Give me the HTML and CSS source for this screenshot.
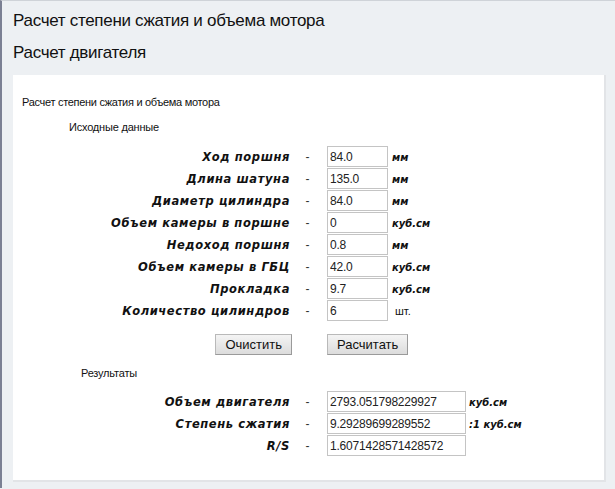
FILE: index.html
```html
<!DOCTYPE html>
<html lang="ru">
<head>
  <meta charset="UTF-8" />
  <title>Расчет двигателя</title>
  <link rel="stylesheet" href="styles.css">
</head>
<body>

  <!-- Заголовки страницы -->
  <h1 class="page-title">Расчет степени сжатия и объема мотора</h1>
  <h2 class="page-subtitle">Расчет двигателя</h2>

  <!-- Белая панель с калькулятором -->
  <div class="panel">
    <p class="panel-caption">Расчет степени сжатия и объема мотора</p>
    <p class="group-title">Исходные данные</p>

    <div class="calc-grid">
      <span class="label">Ход поршня</span><span class="dash">-</span>
      <input class="field" type="text" value="84.0"><span class="unit">мм</span>

      <span class="label">Длина шатуна</span><span class="dash">-</span>
      <input class="field" type="text" value="135.0"><span class="unit">мм</span>

      <span class="label">Диаметр цилиндра</span><span class="dash">-</span>
      <input class="field" type="text" value="84.0"><span class="unit">мм</span>

      <span class="label">Объем камеры в поршне</span><span class="dash">-</span>
      <input class="field" type="text" value="0"><span class="unit">куб.см</span>

      <span class="label">Недоход поршня</span><span class="dash">-</span>
      <input class="field" type="text" value="0.8"><span class="unit">мм</span>

      <span class="label">Объем камеры в ГБЦ</span><span class="dash">-</span>
      <input class="field" type="text" value="42.0"><span class="unit">куб.см</span>

      <span class="label">Прокладка</span><span class="dash">-</span>
      <input class="field" type="text" value="9.7"><span class="unit">куб.см</span>

      <span class="label">Количество цилиндров</span><span class="dash">-</span>
      <input class="field" type="text" value="6"><span class="unit unit-plain">шт.</span>
    </div>

    <div class="buttons">
      <div class="btn-left"><button class="btn">Очистить</button></div>
      <div class="btn-right"><button class="btn">Расчитать</button></div>
    </div>

    <p class="group-title results-title">Результаты</p>

    <div class="calc-grid results">
      <span class="label">Объем двигателя</span><span class="dash">-</span>
      <input class="field wide" type="text" value="2793.051798229927"><span class="unit">куб.см</span>

      <span class="label">Степень сжатия</span><span class="dash">-</span>
      <input class="field wide" type="text" value="9.29289699289552"><span class="unit">:1 куб.см</span>

      <span class="label">R/S</span><span class="dash">-</span>
      <input class="field wide" type="text" value="1.6071428571428572"><span class="unit"></span>
    </div>
  </div>

</body>
</html>
```

FILE: styles.css
```css
body {
  margin: 0;
  padding: 0 9px 0 13px;
  background: #edf0f3;
  border-left: 2px solid #7b8093;
  border-top: 1px solid #cfd3d8;
  font-family: 'Liberation Sans', Arial, sans-serif;
  color: #111;
  height: 488px;
  box-sizing: border-box;
}

.page-title,
.page-subtitle {
  font-weight: normal;
  font-size: 17px;
  letter-spacing: -0.3px;
  margin: 0;
  line-height: 32px;
  margin-left: -2px;
}

.page-title {
  padding-top: 4px;
}

.page-subtitle {
  margin-bottom: 6px;
}

/* Панель калькулятора */
.panel {
  background: #ffffff;
  margin-left: -2px;
  border-right: 2px solid #e2e4e7;
  border-bottom: 2px solid #e2e4e7;
  padding: 19px 0 23px 0;
}

.panel-caption {
  margin: 0 0 0 9px;
  font-size: 11px;
  letter-spacing: -0.3px;
  line-height: 16px;
}

.group-title {
  margin: 9px 0 0 56px;
  font-size: 11px;
  letter-spacing: -0.2px;
  line-height: 16px;
}

.calc-grid {
  display: grid;
  grid-template-columns: 277px 37px 64px auto;
  grid-auto-rows: 22px;
  align-items: center;
  margin-top: 11px;
}

.label {
  text-align: right;
  font-family: 'DejaVu Sans', Verdana, sans-serif;
  font-weight: bold;
  font-style: italic;
  font-size: 11.5px;
  letter-spacing: 0.6px;
}

.dash {
  text-align: center;
  font-size: 12px;
  color: #333;
  padding-right: 2px;
}

.field {
  box-sizing: border-box;
  width: 61px;
  height: 21px;
  margin: 0 0 1px 0;
  padding: 0 2px;
  border: 1px solid #c4c4c4;
  font-family: 'Liberation Sans', Arial, sans-serif;
  font-size: 12px;
  letter-spacing: -0.2px;
  color: #222;
  background: #fff;
}

.field.wide {
  width: 139px;
}

.results {
  grid-template-columns: 277px 37px 141px auto;
}

.unit {
  font-family: 'DejaVu Sans', Verdana, sans-serif;
  font-weight: bold;
  font-style: italic;
  font-size: 10px;
  padding-left: 1px;
}

.unit-plain {
  font-family: 'Liberation Sans', Arial, sans-serif;
  font-weight: normal;
  font-style: normal;
  font-size: 11px;
  padding-left: 4px;
}

/* Кнопки */
.buttons {
  display: grid;
  grid-template-columns: 279px 35px auto;
  margin-top: 12px;
}

.btn-left {
  text-align: right;
}

.btn-right {
  grid-column: 3;
}

.btn {
  height: 21px;
  padding: 0 9px;
  font-family: 'Liberation Sans', Arial, sans-serif;
  font-size: 13px;
  color: #111;
  background: linear-gradient(#f4f4f4, #dcdcdc);
  border: 1px solid #b9b9b9;
  border-right-color: #9a9a9a;
  border-bottom-color: #9a9a9a;
  border-radius: 0;
}

.results-title {
  margin: 10px 0 0 68px;
}

.results {
  margin-top: 10px;
}
```
